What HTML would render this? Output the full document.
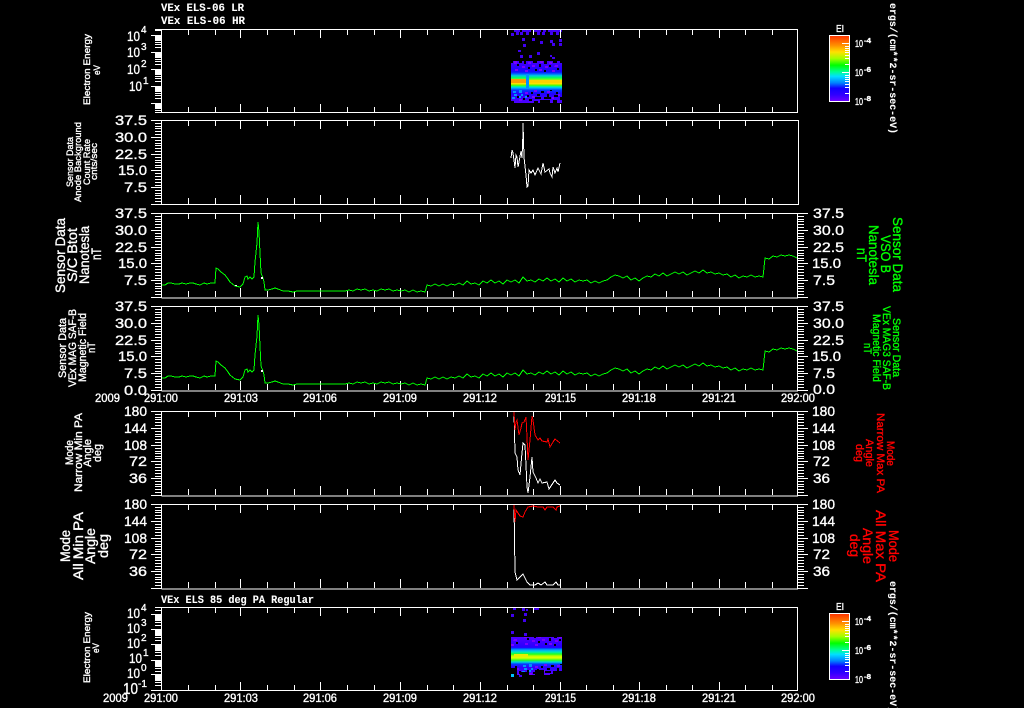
<!DOCTYPE html>
<html><head><meta charset="utf-8"><title>VEx ELS</title>
<style>
html,body{margin:0;padding:0;background:#000;width:1024px;height:708px;overflow:hidden}
svg{display:block}
text{font-family:"Liberation Sans",sans-serif;fill:#fff;font-size:14px;stroke:#fff;stroke-width:.35}
.m{font-family:"Liberation Mono",monospace;font-size:11px;font-weight:bold;stroke-width:.1}
.x{font-family:"Liberation Sans",sans-serif;font-size:11.5px}
.s{font-family:"Liberation Sans",sans-serif;font-size:9.5px}
text.g{fill:#00ff00;stroke:#00ff00}
text.r{fill:#ff0000;stroke:#ff0000}
.ln{fill:none;stroke:#fff;stroke-width:1;shape-rendering:crispEdges}
.tr{fill:none;stroke-width:1;shape-rendering:crispEdges}
</style></head><body>
<svg width="1024" height="708" viewBox="0 0 1024 708" xmlns="http://www.w3.org/2000/svg">
<defs>
<linearGradient id="cb" x1="0" y1="0" x2="0" y2="1">
<stop offset="0" stop-color="#ff3000"/><stop offset=".15" stop-color="#ff9000"/><stop offset=".25" stop-color="#ffe000"/><stop offset=".35" stop-color="#a0ff00"/><stop offset=".45" stop-color="#00ff00"/><stop offset=".55" stop-color="#00ff90"/><stop offset=".62" stop-color="#00e0ff"/><stop offset=".72" stop-color="#0080ff"/><stop offset=".8" stop-color="#1000ff"/><stop offset=".9" stop-color="#3000ff"/><stop offset="1" stop-color="#7000ff"/>
</linearGradient>
<linearGradient id="h1" gradientUnits="userSpaceOnUse" x1="0" y1="61" x2="0" y2="103">
<stop offset="0" stop-color="#4800ff"/><stop offset=".2" stop-color="#2400ff"/><stop offset=".27" stop-color="#1010ff"/><stop offset=".68" stop-color="#0040ff"/><stop offset=".78" stop-color="#2000ff"/><stop offset="1" stop-color="#5000ff"/>
</linearGradient>
<linearGradient id="b1" gradientUnits="userSpaceOnUse" x1="0" y1="72" x2="0" y2="90">
<stop offset="0" stop-color="#1010ff"/><stop offset=".1" stop-color="#0060ff"/><stop offset=".2" stop-color="#00c8e0"/><stop offset=".32" stop-color="#00ff60"/><stop offset=".45" stop-color="#a0ff00"/><stop offset=".55" stop-color="#ffe800"/><stop offset=".65" stop-color="#ffe000"/><stop offset=".74" stop-color="#50ff00"/><stop offset=".8" stop-color="#00ff90"/><stop offset=".88" stop-color="#00b8ff"/><stop offset="1" stop-color="#0040ff"/>
</linearGradient>
<linearGradient id="h7" gradientUnits="userSpaceOnUse" x1="0" y1="637" x2="0" y2="675">
<stop offset="0" stop-color="#5000ff"/><stop offset=".25" stop-color="#2800ff"/><stop offset=".7" stop-color="#0040ff"/><stop offset=".8" stop-color="#3000ff"/><stop offset="1" stop-color="#5800ff"/>
</linearGradient>
<linearGradient id="b7" gradientUnits="userSpaceOnUse" x1="0" y1="648" x2="0" y2="664">
<stop offset="0" stop-color="#0030ff"/><stop offset=".12" stop-color="#00a0ff"/><stop offset=".25" stop-color="#00e8c0"/><stop offset=".38" stop-color="#20ff20"/><stop offset=".5" stop-color="#c0ff00"/><stop offset=".62" stop-color="#e0ff00"/><stop offset=".76" stop-color="#30ff20"/><stop offset=".88" stop-color="#00d0e0"/><stop offset="1" stop-color="#0040ff"/>
</linearGradient>
<pattern id="n1" width="51" height="42" patternUnits="userSpaceOnUse" x="511" y="61">
<path fill="#000" d="M0 0h2v2H0zM8 0h3v2H8zM13 0h2v3h-2zM22 0h4v2h-4zM33 0h3v3h-3zM42 0h4v2h-4zM49 0h2v2h-2zM6 3h2v2H6zM28 3h2v3h-2zM38 4h2v2h-2zM17 6h2v2h-2zM46 7h2v2h-2zM24 8h2v2h-2zM33 9h2v2h-2zM39 28h2v2h-2zM30 30h3v2h-3zM20 31h2v2h-2zM45 31h2v2h-2zM26 33h3v2h-3zM36 33h2v3h-2zM16 34h2v2h-2zM43 34h4v2h-4zM6 35h2v2H6zM24 36h6v2h-6zM33 36h7v2h-7zM49 36h2v3h-2zM12 37h2v2h-2zM18 38h3v2h-3zM29 39h10v3H29zM42 39h4v3h-4zM23 40h4v2h-4zM0 40h3v2H0z"/>
<path fill="#7a00ff" d="M3 0h3v3H3zM17 1h3v2h-3zM29 0h3v2h-3zM38 1h3v2h-3zM11 5h3v2h-3zM21 4h3v2h-3zM34 5h3v2h-3zM44 4h3v2h-4zM4 8h3v2H4zM14 9h3v2h-3zM28 8h3v2h-3zM41 9h3v2h-3zM23 29h3v2h-3zM36 30h3v2h-3zM14 31h3v2h-3zM41 36h2v2h-2zM21 35h3v2h-3zM8 38h3v2H8zM47 33h2v2h-2z"/>
<path fill="#0090ff" d="M2 30h3v2H2zM8 29h3v3H8zM3 33h3v2H3zM10 33h2v2h-2zM1 36h3v2H1zM8 35h2v2H8zM14 35h2v2h-2z"/>
</pattern>
<pattern id="n7" href="#n1" x="521" y="635"></pattern>
<g id="xt84" class="ln"><path d="M188.500 0v6M215.500 0v6M240.500 0v9M267.500 0v6M294.500 0v6M320.500 0v9M347.500 0v6M374.500 0v6M400.500 0v9M427.500 0v6M453.500 0v6M480.500 0v9M507.500 0v6M533.500 0v6M560.500 0v9M586.500 0v6M613.500 0v6M639.500 0v9M666.500 0v6M692.500 0v6M719.500 0v9M745.500 0v6M772.500 0v6M188.500 84v-6M215.500 84v-6M240.500 84v-9M267.500 84v-6M294.500 84v-6M320.500 84v-9M347.500 84v-6M374.500 84v-6M400.500 84v-9M427.500 84v-6M453.500 84v-6M480.500 84v-9M507.500 84v-6M533.500 84v-6M560.500 84v-9M586.500 84v-6M613.500 84v-6M639.500 84v-9M666.500 84v-6M692.500 84v-6M719.500 84v-9M745.500 84v-6M772.500 84v-6"/></g>
<g id="yl" class="ln"><path d="M151 .5H161M151 17.500H161M151 34.500H161M151 50.500H161M151 67.500H161M151 84.500H161M155 3.500h6M155 6.500h6M155 8.500h6M155 11.500h6M155 14.500h6M155 20.500h6M155 23.500h6M155 25.500h6M155 28.500h6M155 31.500h6M155 37.500h6M155 40.500h6M155 42.500h6M155 45.500h6M155 47.500h6M155 53.500h6M155 56.500h6M155 59.500h6M155 62.500h6M155 65.500h6M155 70.500h6M155 73.500h6M155 75.500h6M155 78.500h6M155 81.500h6"/></g>
<g id="yr" class="ln"><path d="M798 .5H808M798 17.500H808M798 34.500H808M798 50.500H808M798 67.500H808M798 84.500H808M798 3.500h6M798 6.500h6M798 8.500h6M798 11.500h6M798 14.500h6M798 20.500h6M798 23.500h6M798 25.500h6M798 28.500h6M798 31.500h6M798 37.500h6M798 40.500h6M798 42.500h6M798 45.500h6M798 47.500h6M798 53.500h6M798 56.500h6M798 59.500h6M798 62.500h6M798 65.500h6M798 70.500h6M798 73.500h6M798 75.500h6M798 78.500h6M798 81.500h6"/></g>
<g id="bar">
<rect x="829.500" y="35.500" width="20" height="66" fill="url(#cb)" stroke="#fff" shape-rendering="crispEdges"/>
<path class="ln" d="M842 43.500h7M842 72.500h7M845 46.500h4M845 48.500h4M845 50.500h4M845 52.500h4M845 55.500h4M845 58.500h4M845 64.500h4M845 75.500h4M845 77.500h4M845 79.500h4M845 81.500h4M845 84.500h4M845 87.500h4M845 93.500h4"/>
</g>
<path id="tg" d="M162 285L165 285L168 283L171 283L175 284L179 284L182 283L186 284L190 283L193 283L196 284L200 285L204 283L207 284L211 283L215 283L216 268L218 269L221 272L225 275L228 279L230 282L235 286L240 287L243 284L245 277L247 276L248 279L250 277L252 279L254 277L255 262L257 243L258 222L259 232L260 253L261 273L263 278L264 282L265 290L268 290L272 289L275 288L278 289L283 291L288 291L293 292L297 291L345 291L349 290L353 291L357 289L361 290L365 289L369 291L373 290L377 291L381 289L385 290L389 289L393 291L397 290L401 291L405 290L409 292L413 290L417 292L421 291L425 292L427 285L431 286L435 284L439 286L443 284L447 286L451 284L455 285L459 283L463 285L467 281L471 284L475 283L479 285L483 281L487 283L491 280L495 283L499 281L503 284L507 280L511 282L515 280L519 283L523 277L527 281L531 280L535 282L539 279L543 281L547 278L551 281L555 279L559 282L563 278L567 281L571 279L575 282L579 280L583 281L587 280L591 283L595 281L599 283L603 281L607 280L611 277L615 275L619 276L623 278L627 276L631 280L635 278L639 281L643 278L647 276L651 277L655 274L659 276L663 273L667 276L671 274L675 272L679 274L683 272L687 275L691 273L695 271L699 273L703 270L707 273L711 272L715 274L719 273L723 275L727 274L731 277L735 275L739 278L743 276L747 277L751 275L755 277L759 276L763 277L765 258L769 259L773 256L777 257L781 255L785 256L789 255L793 256L797 258"/>
</defs>

<rect width="1024" height="708" fill="#000"/>

<!-- titles -->
<text class="m" x="161" y="11" textLength="83" lengthAdjust="spacingAndGlyphs">VEx ELS-06 LR</text>
<text class="m" x="161" y="24" textLength="84" lengthAdjust="spacingAndGlyphs">VEx ELS-06 HR</text>
<text class="m" x="161" y="603" textLength="153" lengthAdjust="spacingAndGlyphs">VEx ELS 85 deg PA Regular</text>

<!-- heat map 1 -->
<rect x="511" y="61" width="51" height="42" fill="url(#h1)"/>
<rect x="511" y="61" width="51" height="42" fill="url(#n1)"/>
<rect x="511" y="72" width="51" height="18" fill="url(#b1)"/>
<rect x="511" y="79" width="15" height="4" fill="#ff9c00"/>
<rect x="529" y="80" width="33" height="3" fill="#ffd000"/>
<rect x="526" y="74" width="3" height="14" fill="#0090ff"/>
<path fill="#4000f0" d="M514 29h6v3h-6zM522 29h9v3h-9zM534 29h7v3h-7zM543 29h3v3h-3zM548 29h14v3h-14zM511 33h3v3h-3zM516 32h3v3h-3zM520 32h3v3h-3zM526 32h3v3h-3zM537 32h3v3h-3zM542 32h3v3h-3zM550 32h3v3h-3zM556 32h3v3h-3zM522 38h3v3h-3zM532 38h3v3h-3zM540 41h3v3h-3zM550 40h3v3h-3zM559 39h3v3h-3zM523 44h3v3h-3zM552 43h3v3h-3zM559 43h3v3h-3zM518 50h3v2h-3zM537 52h3v3h-3zM550 55h2v2h-2zM520 55h3v3h-3zM529 55h3v3h-3zM552 57h3v2h-3z"/>
<!-- heat map 7 -->
<rect x="511" y="637" width="51" height="38" fill="url(#h7)"/>
<rect x="511" y="637" width="51" height="38" fill="url(#n7)"/>
<rect x="511" y="648" width="51" height="16" fill="url(#b7)"/>
<rect x="514" y="654" width="14" height="3" fill="#e8f000"/>
<path fill="#000" d="M511 668h6v7h-6zM535 670h9v5h-9zM553 671h9v4h-9zM520 672h9v3h-9z"/>
<path fill="#4000f0" d="M513 608h3v2h-3zM522 607h3v4h-3zM526 609h2v2h-2zM534 608h5v2h-5zM511 614h3v3h-3zM524 613h3v3h-3zM523 619h3v3h-3zM511 631h3v3h-3zM524 633h3v3h-3zM519 675h3v2h-3z"/>
<rect x="511" y="674" width="3" height="3" fill="#00c0ff"/>

<!-- panel frames -->
<g class="ln">
<path d="M155 29.500H797.500V112.500H155M161.500 29V113"/>
<path d="M151 120.500H798.500V204.500H151M161.500 120V205"/>
<path d="M161.500 213V298M797.500 213V298H161.500M161.500 213.500H797.500"/>
<path d="M161.500 306V391M797.500 306V391H161.500M161.500 306.500H797.500"/>
<path d="M161.500 411V496M797.500 411V496H161.500M161.500 411.500H797.500"/>
<path d="M161.500 504V589M797.500 504V589H161.500M161.500 504.500H797.500"/>
<path d="M155 607.500H797.500V690.500H155M161.500 607V691"/>
<path d="M151 35.500h10M151 52.500h10M151 69.500h10M151 86.500h10M151 103.500h10M155 30.500h6M155 36.500h6M155 37.500h6M155 38.500h6M155 39.500h6M155 40.500h6M155 42.500h6M155 44.500h6M155 47.500h6M155 53.500h6M155 54.500h6M155 55.500h6M155 56.500h6M155 57.500h6M155 59.500h6M155 61.500h6M155 64.500h6M155 70.500h6M155 71.500h6M155 72.500h6M155 73.500h6M155 74.500h6M155 76.500h6M155 78.500h6M155 81.500h6M155 87.500h6M155 88.500h6M155 89.500h6M155 90.500h6M155 91.500h6M155 93.500h6M155 95.500h6M155 98.500h6M155 104.500h6M155 105.500h6M155 106.500h6M155 107.500h6M155 108.500h6M155 110.500h6"/>
<path d="M151 614.500h10M151 629.500h10M151 644.500h10M151 660.500h10M151 674.500h10M151 690.500h10M155 610.500h6M155 615.500h6M155 616.500h6M155 617.500h6M155 618.500h6M155 619.500h6M155 620.500h6M155 622.500h6M155 625.500h6M155 630.500h6M155 631.500h6M155 632.500h6M155 633.500h6M155 634.500h6M155 635.500h6M155 637.500h6M155 640.500h6M155 645.500h6M155 646.500h6M155 647.500h6M155 648.500h6M155 649.500h6M155 650.500h6M155 652.500h6M155 655.500h6M155 661.500h6M155 662.500h6M155 663.500h6M155 664.500h6M155 665.500h6M155 666.500h6M155 668.500h6M155 671.500h6M155 675.500h6M155 676.500h6M155 677.500h6M155 678.500h6M155 679.500h6M155 680.500h6M155 682.500h6M155 685.500h6"/>
</g>
<use href="#xt84" y="29"/><use href="#xt84" y="120"/><use href="#xt84" y="213"/><use href="#xt84" y="306"/><use href="#xt84" y="411"/><use href="#xt84" y="504"/><use href="#xt84" y="607"/>
<use href="#yl" y="120"/><use href="#yl" y="213"/><use href="#yl" y="306"/><use href="#yl" y="411"/><use href="#yl" y="504"/>
<use href="#yr" y="213"/><use href="#yr" y="306"/><use href="#yr" y="411"/><use href="#yr" y="504"/>

<!-- traces -->
<path class="tr" stroke="#fff" d="M511 158L512 150L513 153L514 160L515 168L516 155L517 157L518 167L519 162L521 151L522 158L523 133L523 123L524 157L526 175L527 187L528 186L529 170L531 173L533 170L535 175L538 168L541 174L543 163L545 172L549 169L550 173L552 177L553 167L555 173L557 168L558 172L560 163"/>
<use href="#tg" class="tr" stroke="#00ff00"/>
<use href="#tg" class="tr" stroke="#00ff00" y="93"/>
<path fill="#fff" d="M261 277h2v2h-2zM261 370h2v2h-2zM235 285h2v1h-2z"/>
<path class="tr" stroke="#fff" d="M514 412L515 453L517 457L518 470L520 475L522 453L523 443L525 445L526 465L527 487L528 493L530 477L532 457L533 472L536 478L538 483L540 479L542 483L547 482L549 489L553 483L555 480L557 483L560 485"/>
<path class="tr" stroke="#ff0000" d="M514 412L515 430L516 422L517 420L519 435L521 428L522 423L524 422L526 417L527 437L528 460L530 440L532 416L533 420L535 435L538 440L540 438L542 441L547 442L548 439L550 447L553 442L555 439L560 443"/>
<path class="tr" stroke="#fff" d="M514 505L515 572L517 580L520 577L523 574L527 582L530 585L535 585L538 583L541 585L545 582L547 585L553 585L556 582L558 585L560 585"/>
<path class="tr" stroke="#ff0000" d="M514 505L515 522L516 510L518 513L520 516L523 517L525 512L528 507L533 506L538 507L543 507L545 510L547 507L553 507L556 510L557 507L560 506"/>

<!-- left axis labels -->
<g>
<text x="127" y="41" textLength="13" lengthAdjust="spacingAndGlyphs">10</text><text x="141" y="33" style="font-size:10px">4</text>
<text x="127" y="57" textLength="13" lengthAdjust="spacingAndGlyphs">10</text><text x="141" y="50" style="font-size:10px">3</text>
<text x="127" y="74" textLength="13" lengthAdjust="spacingAndGlyphs">10</text><text x="141" y="67" style="font-size:10px">2</text>
<text x="129" y="91" textLength="13" lengthAdjust="spacingAndGlyphs">10</text><text x="143" y="84" style="font-size:10px">1</text>

<text x="115" y="125" textLength="32" lengthAdjust="spacingAndGlyphs">37.5</text>
<text x="115" y="142" textLength="32" lengthAdjust="spacingAndGlyphs">30.0</text>
<text x="115" y="159" textLength="32" lengthAdjust="spacingAndGlyphs">22.5</text>
<text x="118" y="175" textLength="29" lengthAdjust="spacingAndGlyphs">15.0</text>
<text x="124" y="192" textLength="23" lengthAdjust="spacingAndGlyphs">7.5</text>

<text x="115" y="218" textLength="32" lengthAdjust="spacingAndGlyphs">37.5</text>
<text x="115" y="235" textLength="32" lengthAdjust="spacingAndGlyphs">30.0</text>
<text x="115" y="252" textLength="32" lengthAdjust="spacingAndGlyphs">22.5</text>
<text x="118" y="268" textLength="29" lengthAdjust="spacingAndGlyphs">15.0</text>
<text x="124" y="285" textLength="23" lengthAdjust="spacingAndGlyphs">7.5</text>

<text x="115" y="311" textLength="32" lengthAdjust="spacingAndGlyphs">37.5</text>
<text x="115" y="328" textLength="32" lengthAdjust="spacingAndGlyphs">30.0</text>
<text x="115" y="345" textLength="32" lengthAdjust="spacingAndGlyphs">22.5</text>
<text x="118" y="361" textLength="29" lengthAdjust="spacingAndGlyphs">15.0</text>
<text x="124" y="378" textLength="23" lengthAdjust="spacingAndGlyphs">7.5</text>
<text x="124" y="395" textLength="23" lengthAdjust="spacingAndGlyphs">0.0</text>

<text x="124" y="416" textLength="23" lengthAdjust="spacingAndGlyphs">180</text>
<text x="124" y="433" textLength="23" lengthAdjust="spacingAndGlyphs">144</text>
<text x="124" y="450" textLength="23" lengthAdjust="spacingAndGlyphs">108</text>
<text x="129" y="466" textLength="18" lengthAdjust="spacingAndGlyphs">72</text>
<text x="129" y="483" textLength="18" lengthAdjust="spacingAndGlyphs">36</text>

<text x="124" y="509" textLength="23" lengthAdjust="spacingAndGlyphs">180</text>
<text x="124" y="526" textLength="23" lengthAdjust="spacingAndGlyphs">144</text>
<text x="124" y="543" textLength="23" lengthAdjust="spacingAndGlyphs">108</text>
<text x="129" y="559" textLength="18" lengthAdjust="spacingAndGlyphs">72</text>
<text x="129" y="576" textLength="18" lengthAdjust="spacingAndGlyphs">36</text>

<text x="127" y="618" textLength="13" lengthAdjust="spacingAndGlyphs">10</text><text x="141" y="611" style="font-size:10px">4</text>
<text x="127" y="633" textLength="13" lengthAdjust="spacingAndGlyphs">10</text><text x="141" y="626" style="font-size:10px">3</text>
<text x="127" y="648" textLength="13" lengthAdjust="spacingAndGlyphs">10</text><text x="141" y="641" style="font-size:10px">2</text>
<text x="129" y="663" textLength="13" lengthAdjust="spacingAndGlyphs">10</text><text x="143" y="656" style="font-size:10px">1</text>
<text x="127" y="678" textLength="13" lengthAdjust="spacingAndGlyphs">10</text><text x="141" y="671" style="font-size:10px">0</text>
<text x="123" y="694" textLength="15" lengthAdjust="spacingAndGlyphs" style="font-size:16px">10</text><text x="138" y="687" textLength="9" lengthAdjust="spacingAndGlyphs" style="font-size:10px">-1</text>
</g>

<!-- right axis labels -->
<g>
<text x="813" y="218" textLength="31" lengthAdjust="spacingAndGlyphs">37.5</text>
<text x="813" y="235" textLength="31" lengthAdjust="spacingAndGlyphs">30.0</text>
<text x="813" y="252" textLength="31" lengthAdjust="spacingAndGlyphs">22.5</text>
<text x="812" y="268" textLength="29" lengthAdjust="spacingAndGlyphs">15.0</text>
<text x="813" y="285" textLength="22" lengthAdjust="spacingAndGlyphs">7.5</text>
<text x="813" y="311" textLength="31" lengthAdjust="spacingAndGlyphs">37.5</text>
<text x="813" y="328" textLength="31" lengthAdjust="spacingAndGlyphs">30.0</text>
<text x="813" y="345" textLength="31" lengthAdjust="spacingAndGlyphs">22.5</text>
<text x="812" y="361" textLength="29" lengthAdjust="spacingAndGlyphs">15.0</text>
<text x="813" y="378" textLength="22" lengthAdjust="spacingAndGlyphs">7.5</text>
<text x="813" y="394" textLength="22" lengthAdjust="spacingAndGlyphs">0.0</text>
<text x="812" y="416" textLength="23" lengthAdjust="spacingAndGlyphs">180</text>
<text x="812" y="433" textLength="23" lengthAdjust="spacingAndGlyphs">144</text>
<text x="812" y="450" textLength="23" lengthAdjust="spacingAndGlyphs">108</text>
<text x="813" y="466" textLength="17" lengthAdjust="spacingAndGlyphs">72</text>
<text x="813" y="483" textLength="17" lengthAdjust="spacingAndGlyphs">36</text>
<text x="812" y="509" textLength="23" lengthAdjust="spacingAndGlyphs">180</text>
<text x="812" y="526" textLength="23" lengthAdjust="spacingAndGlyphs">144</text>
<text x="812" y="543" textLength="23" lengthAdjust="spacingAndGlyphs">108</text>
<text x="813" y="559" textLength="17" lengthAdjust="spacingAndGlyphs">72</text>
<text x="813" y="576" textLength="17" lengthAdjust="spacingAndGlyphs">36</text>
</g>

<!-- x labels -->
<g>
<text class="x" x="95" y="402" textLength="25" lengthAdjust="spacingAndGlyphs">2009</text>
<text class="x" x="144" y="402" textLength="34" lengthAdjust="spacingAndGlyphs">291:00</text>
<text class="x" x="224" y="402" textLength="34" lengthAdjust="spacingAndGlyphs">291:03</text>
<text class="x" x="303" y="402" textLength="34" lengthAdjust="spacingAndGlyphs">291:06</text>
<text class="x" x="383" y="402" textLength="34" lengthAdjust="spacingAndGlyphs">291:09</text>
<text class="x" x="463" y="402" textLength="34" lengthAdjust="spacingAndGlyphs">291:12</text>
<text class="x" x="545" y="402" textLength="31" lengthAdjust="spacingAndGlyphs">291:15</text>
<text class="x" x="622" y="402" textLength="34" lengthAdjust="spacingAndGlyphs">291:18</text>
<text class="x" x="702" y="402" textLength="34" lengthAdjust="spacingAndGlyphs">291:21</text>
<text class="x" x="781" y="402" textLength="34" lengthAdjust="spacingAndGlyphs">292:00</text>
<text class="x" x="103" y="702" textLength="25" lengthAdjust="spacingAndGlyphs">2009</text>
<text class="x" x="144" y="702" textLength="34" lengthAdjust="spacingAndGlyphs">291:00</text>
<text class="x" x="224" y="702" textLength="34" lengthAdjust="spacingAndGlyphs">291:03</text>
<text class="x" x="303" y="702" textLength="34" lengthAdjust="spacingAndGlyphs">291:06</text>
<text class="x" x="383" y="702" textLength="34" lengthAdjust="spacingAndGlyphs">291:09</text>
<text class="x" x="463" y="702" textLength="34" lengthAdjust="spacingAndGlyphs">291:12</text>
<text class="x" x="545" y="702" textLength="31" lengthAdjust="spacingAndGlyphs">291:15</text>
<text class="x" x="622" y="702" textLength="34" lengthAdjust="spacingAndGlyphs">291:18</text>
<text class="x" x="702" y="702" textLength="34" lengthAdjust="spacingAndGlyphs">291:21</text>
<text class="x" x="781" y="702" textLength="34" lengthAdjust="spacingAndGlyphs">292:00</text>
</g>

<!-- left rotated titles -->
<g>
<text class="s" transform="translate(90,105) rotate(-90)" textLength="71" lengthAdjust="spacingAndGlyphs">Electron Energy</text>
<text class="s" transform="translate(100,75) rotate(-90)" textLength="10" lengthAdjust="spacingAndGlyphs">eV</text>
<text class="s" transform="translate(73,187) rotate(-90)" textLength="50" lengthAdjust="spacingAndGlyphs">Sensor Data</text>
<text class="s" transform="translate(81,202) rotate(-90)" textLength="80" lengthAdjust="spacingAndGlyphs">Anode Background</text>
<text class="s" transform="translate(90,185) rotate(-90)" textLength="46" lengthAdjust="spacingAndGlyphs">Count Rate</text>
<text class="s" transform="translate(97,180) rotate(-90)" textLength="37" lengthAdjust="spacingAndGlyphs">cnts/sec</text>

<text transform="translate(65,293) rotate(-90)" textLength="75" lengthAdjust="spacingAndGlyphs">Sensor Data</text>
<text transform="translate(77,282) rotate(-90)" textLength="54" lengthAdjust="spacingAndGlyphs">S/C Btot</text>
<text transform="translate(89,284) rotate(-90)" textLength="58" lengthAdjust="spacingAndGlyphs">Nanotesla</text>
<text transform="translate(101,260) rotate(-90)" textLength="12" lengthAdjust="spacingAndGlyphs">nT</text>

<text style="font-size:11px" transform="translate(66,378) rotate(-90)" textLength="60" lengthAdjust="spacingAndGlyphs">Sensor Data</text>
<text style="font-size:11px" transform="translate(76,387) rotate(-90)" textLength="78" lengthAdjust="spacingAndGlyphs">VEx MAG SAF-B</text>
<text style="font-size:11px" transform="translate(86,382) rotate(-90)" textLength="69" lengthAdjust="spacingAndGlyphs">Magnetic Field</text>
<text style="font-size:11px" transform="translate(95,353) rotate(-90)" textLength="11" lengthAdjust="spacingAndGlyphs">nT</text>

<text style="font-size:11px" transform="translate(73,465) rotate(-90)" textLength="25" lengthAdjust="spacingAndGlyphs">Mode</text>
<text style="font-size:11px" transform="translate(82,492) rotate(-90)" textLength="79" lengthAdjust="spacingAndGlyphs">Narrow Min PA</text>
<text style="font-size:11px" transform="translate(91,467) rotate(-90)" textLength="28" lengthAdjust="spacingAndGlyphs">Angle</text>
<text style="font-size:11px" transform="translate(101,462) rotate(-90)" textLength="18" lengthAdjust="spacingAndGlyphs">deg</text>

<text transform="translate(70,562) rotate(-90)" textLength="32" lengthAdjust="spacingAndGlyphs">Mode</text>
<text transform="translate(83,580) rotate(-90)" textLength="68" lengthAdjust="spacingAndGlyphs">All Min PA</text>
<text transform="translate(95,564) rotate(-90)" textLength="36" lengthAdjust="spacingAndGlyphs">Angle</text>
<text transform="translate(108,558) rotate(-90)" textLength="24" lengthAdjust="spacingAndGlyphs">deg</text>

<text class="s" transform="translate(90,683) rotate(-90)" textLength="71" lengthAdjust="spacingAndGlyphs">Electron Energy</text>
<text class="s" transform="translate(99,653) rotate(-90)" textLength="10" lengthAdjust="spacingAndGlyphs">eV</text>
</g>

<!-- right rotated titles -->
<g>
<text class="g" transform="translate(893,217) rotate(90)" textLength="75" lengthAdjust="spacingAndGlyphs">Sensor Data</text>
<text class="g" transform="translate(881,235) rotate(90)" textLength="38" lengthAdjust="spacingAndGlyphs">VSO B</text>
<text class="g" transform="translate(869,225) rotate(90)" textLength="60" lengthAdjust="spacingAndGlyphs">Nanotesla</text>
<text class="g" transform="translate(857,248) rotate(90)" textLength="14" lengthAdjust="spacingAndGlyphs">nT</text>
<text class="g" style="font-size:11px" transform="translate(893,318) rotate(90)" textLength="59" lengthAdjust="spacingAndGlyphs">Sensor Data</text>
<text class="g" style="font-size:11px" transform="translate(883,306) rotate(90)" textLength="84" lengthAdjust="spacingAndGlyphs">VEx MAG3 SAF-B</text>
<text class="g" style="font-size:11px" transform="translate(873,314) rotate(90)" textLength="68" lengthAdjust="spacingAndGlyphs">Magnetic Field</text>
<text class="g" style="font-size:11px" transform="translate(864,343) rotate(90)" textLength="11" lengthAdjust="spacingAndGlyphs">nT</text>
</g>
<g>
<text class="r" style="font-size:11px" transform="translate(887,441) rotate(90)" textLength="25" lengthAdjust="spacingAndGlyphs">Mode</text>
<text class="r" style="font-size:11px" transform="translate(877,413) rotate(90)" textLength="80" lengthAdjust="spacingAndGlyphs">Narrow Max PA</text>
<text class="r" style="font-size:11px" transform="translate(866,439) rotate(90)" textLength="28" lengthAdjust="spacingAndGlyphs">Angle</text>
<text class="r" style="font-size:11px" transform="translate(856,444) rotate(90)" textLength="18" lengthAdjust="spacingAndGlyphs">deg</text>
<text class="r" transform="translate(889,530) rotate(90)" textLength="32" lengthAdjust="spacingAndGlyphs">Mode</text>
<text class="r" transform="translate(876,510) rotate(90)" textLength="72" lengthAdjust="spacingAndGlyphs">All Max PA</text>
<text class="r" transform="translate(863,528) rotate(90)" textLength="36" lengthAdjust="spacingAndGlyphs">Angle</text>
<text class="r" transform="translate(850,534) rotate(90)" textLength="23" lengthAdjust="spacingAndGlyphs">deg</text>
</g>

<!-- colour bars -->
<use href="#bar"/>
<use href="#bar" y="578"/>
<text style="font-size:10px" x="836" y="32" textLength="8" lengthAdjust="spacingAndGlyphs">EI</text>
<text style="font-size:10px" x="836" y="610" textLength="8" lengthAdjust="spacingAndGlyphs">EI</text>
<g>
<text style="font-size:10px" x="855" y="47" textLength="8" lengthAdjust="spacingAndGlyphs">10</text><text style="font-size:7px;font-weight:bold" x="864" y="43" textLength="7" lengthAdjust="spacingAndGlyphs">-4</text>
<text style="font-size:10px" x="855" y="76" textLength="8" lengthAdjust="spacingAndGlyphs">10</text><text style="font-size:7px;font-weight:bold" x="864" y="72" textLength="7" lengthAdjust="spacingAndGlyphs">-6</text>
<text style="font-size:10px" x="855" y="105" textLength="8" lengthAdjust="spacingAndGlyphs">10</text><text style="font-size:7px;font-weight:bold" x="864" y="101" textLength="7" lengthAdjust="spacingAndGlyphs">-8</text>
<text style="font-size:10px" x="855" y="625" textLength="8" lengthAdjust="spacingAndGlyphs">10</text><text style="font-size:7px;font-weight:bold" x="864" y="621" textLength="7" lengthAdjust="spacingAndGlyphs">-4</text>
<text style="font-size:10px" x="855" y="654" textLength="8" lengthAdjust="spacingAndGlyphs">10</text><text style="font-size:7px;font-weight:bold" x="864" y="650" textLength="7" lengthAdjust="spacingAndGlyphs">-6</text>
<text style="font-size:10px" x="855" y="683" textLength="8" lengthAdjust="spacingAndGlyphs">10</text><text style="font-size:7px;font-weight:bold" x="864" y="679" textLength="7" lengthAdjust="spacingAndGlyphs">-8</text>
</g>

<text class="m" style="font-size:10px" transform="translate(890,3) rotate(90)" textLength="131" lengthAdjust="spacingAndGlyphs">ergs/(cm**2-sr-sec-eV)</text>
<text class="m" style="font-size:10px" transform="translate(890,581) rotate(90)" textLength="131" lengthAdjust="spacingAndGlyphs">ergs/(cm**2-sr-sec-eV)</text>
</svg>
</body></html>
